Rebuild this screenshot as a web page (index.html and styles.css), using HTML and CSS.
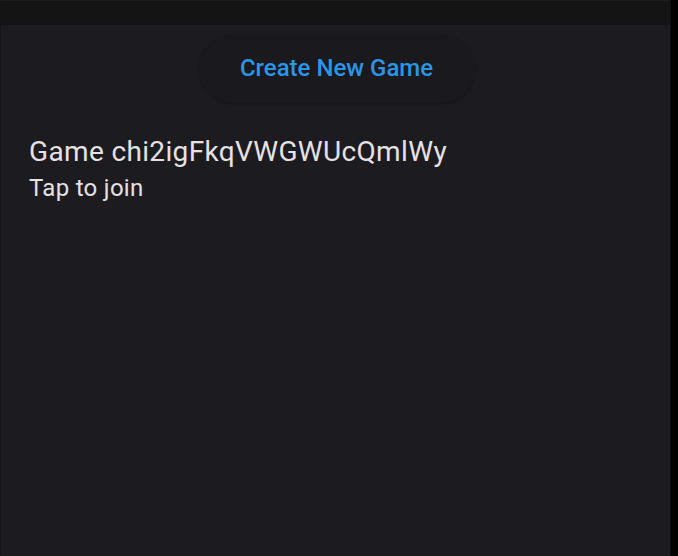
FILE: index.html
```html
<!DOCTYPE html>
<html>
<head>
<meta charset="utf-8">
<link rel="stylesheet" href="styles.css">
</head>
<body>
<div class="frame">
  <div class="app">
    <div class="topbar"></div>
    <main class="content">
      <div class="actions">
        <button class="create-btn">Create New Game</button>
      </div>
      <ul class="games">
        <li class="game">
          <div class="game-title">Game chi2igFkqVWGWUcQmlWy</div>
          <div class="game-sub">Tap to join</div>
        </li>
      </ul>
    </main>
  </div>
  <div class="edge"></div>
</div>
</body>
</html>
```
FILE: styles.css
```css
html, body {
  margin: 0;
  padding: 0;
  height: 100%;
  background: #000;
}
.frame {
  display: flex;
  height: 556px;
  width: 678px;
}
.app {
  width: 671px;
  display: flex;
  flex-direction: column;
  background: #1c1b20;
  border-left: 1px solid #151419;
  box-sizing: border-box;
  border-right: 1px solid #111013;
}
.edge {
  flex: 1;
  background: #000;
}
.topbar {
  height: 25px;
  background: #141414;
  border-top: 1px solid #1e1e1e;
  box-sizing: border-box;
}
.content {
  flex: 1;
  font-family: Roboto, "Liberation Sans", sans-serif;
}
.actions {
  display: flex;
  justify-content: center;
  padding-top: 10px;
  padding-left: 2px;
}
.create-btn {
  width: 276px;
  height: 68px;
  padding: 0 0 3px;
  border: none;
  border-radius: 34px;
  background: #1a191d;
  box-shadow: 0 1px 3px rgba(0,0,0,0.25);
  color: #2b95e8;
  font-family: Roboto, "Liberation Sans", sans-serif;
  font-weight: 500;
  font-size: 24px;
  letter-spacing: 0;
  cursor: pointer;
}
.games {
  list-style: none;
  margin: 0;
  padding: 0;
}
.game {
  padding: 31px 28px 0;
}
.game-title {
  color: #e6e1e5;
  font-size: 28px;
  line-height: 36px;
  letter-spacing: 0.35px;
}
.game-sub {
  color: #e6e1e5;
  font-size: 24px;
  line-height: 36px;
  letter-spacing: 0.3px;
}
```
